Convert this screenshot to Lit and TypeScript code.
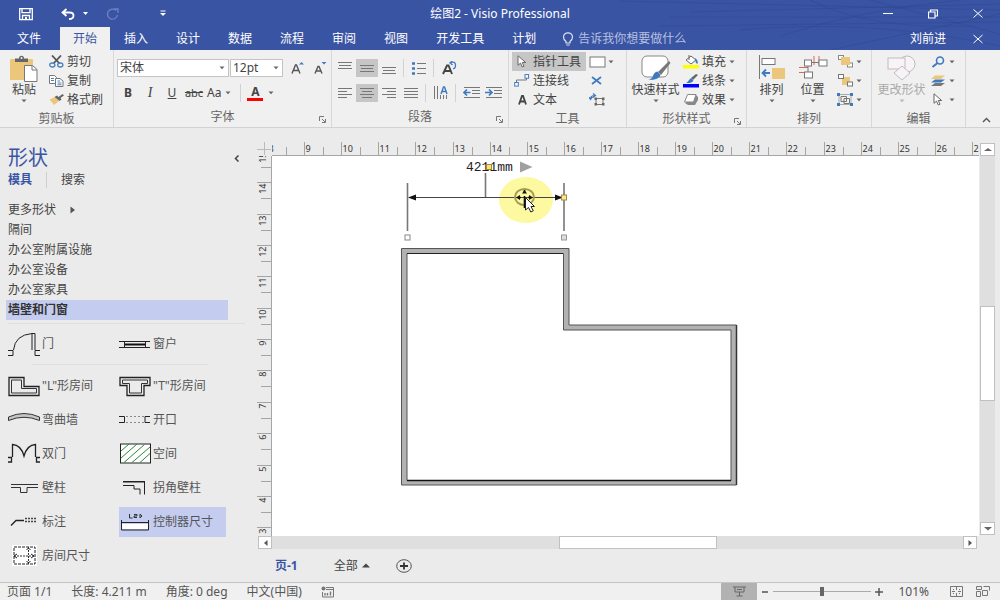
import { LitElement, html, svg, css, TemplateResult, SVGTemplateResult } from "lit";
import { customElement, state } from "lit/decorators.js";
import { classMap } from "lit/directives/class-map.js";

type Art = SVGTemplateResult;

const picture = (width: number, height: number, art: Art) => html`<svg
  class="pic"
  width=${width}
  height=${height}
  viewBox="0 0 ${width} ${height}"
  aria-hidden="true"
>${art}</svg>`;

const bars = (rows: number[][], width = 14) =>
  svg`${rows.map(([x, y, w]) => svg`<path d="M${x} ${y + 0.5}h${Math.min(w, width)}" stroke="#777" fill="none"/>`)}`;

const caret = html`<svg class="pic caret" width="6" height="4" viewBox="0 0 6 4" aria-hidden="true"><path d="M.5 .5h5L3 3.3z" fill="#666"/></svg>`;

const launcher = html`<button class="launcher" aria-label="更多选项">${picture(7, 7, svg`<path d="M.5 5V.5H5M3 3l3 3M6.500 3v3.500H3" fill="none" stroke="#777"/>`)}</button>`;

/* ---- ribbon icons ---- */
const icons: Record<string, TemplateResult> = {
  save: picture(14, 14, svg`<path d="M.7 1.700h12.600v11H.7zM3 1.700v4h8v-4M3.500 12.700V8.500h7v4.200" fill="none" stroke="#fff" stroke-width="1.300"/><path d="M6 10h2v3H6z" fill="#fff"/>`),
  undo: picture(14, 12, svg`<path d="M5.500 1L1.500 4.500l4 3.500M2 4.500h6.500q4 0 4 3.200T8 11" fill="none" stroke="#fff" stroke-width="1.800"/>`),
  redo: picture(14, 12, svg`<path d="M10 2.500A5 5 0 1 0 11.500 7M7.500 1H12v4" fill="none" stroke="#6c80c0" stroke-width="1.400"/>`),
  bulb: picture(12, 14, svg`<path d="M4 9.500Q1.500 7.500 1.500 5a4.500 4.200 0 0 1 9 0Q10.500 7.500 8 9.500V11H4zM4.300 13h3.400" fill="none" stroke="#dfe4f4" stroke-width="1.200"/>`),
  paste: picture(30, 28, svg`<rect x="1" y="4" width="23" height="21" rx="1" fill="#ecc67a"/><path d="M6 7V3.500h4Q10 .8 12.500 .8T15 3.500h4V7z" fill="#666"/><circle cx="12.500" cy="3" r="1" fill="#f0f0f0"/><path d="M15.500 10.500h8l4.500 4v12H15.500z" fill="#fff" stroke="#777"/><path d="M23 10.500v4.500h5" fill="none" stroke="#777"/>`),
  cut: picture(15, 13, svg`<path d="M3 .5l7.500 8M12 .5L4.500 8.500" stroke="#555" stroke-width="1.800"/><ellipse cx="3.300" cy="10" rx="2.600" ry="2" fill="none" stroke="#4a82bd" stroke-width="1.300"/><ellipse cx="11.300" cy="10" rx="2.600" ry="2" fill="none" stroke="#4a82bd" stroke-width="1.300"/>`),
  copy: picture(15, 12, svg`<path d="M.5 .5h5l2 2v6h-7z" fill="#fff" stroke="#777"/><path d="M6.500 3.500H11l3 2.500v5.500H6.500z" fill="#fff" stroke="#777"/><path d="M2 3.500h3M2 5.500h3M8.500 6h2.500M8.500 8h4M8.500 9.800h4" stroke="#4a82bd"/>`),
  brush: picture(15, 11, svg`<path d="M.5 5.500L6 3l4 4-5 4z" fill="#ecc67a"/><path d="M5.500 3L8 1.500l1.500 1.500L13.500 0 15 1.500 11.500 4l1 1.500-2 1.500z" fill="#666"/>`),
  grow: picture(14, 14, svg`<path d="M1 12.500L4.500 4h1L9 12.500M2.500 9.500h5" fill="none" stroke="#555" stroke-width="1.400"/><path d="M8 3.500h5L10.500 1z" fill="#3d7abf"/>`),
  shrink: picture(13, 14, svg`<path d="M1 12.500L4 5.500h1L8 12.500M2.300 10h4.400" fill="none" stroke="#555" stroke-width="1.400"/><path d="M7.500 1h5L10 3.500z" fill="#3d7abf"/>`),
  top: picture(14, 12, bars([[0, 0, 14], [1, 3, 12], [0, 6, 14]])),
  middle: picture(14, 12, bars([[0, 3, 14], [1, 6, 12], [0, 9, 14]])),
  bottom: picture(14, 12, bars([[0, 5, 14], [1, 8, 12], [0, 11, 14]])),
  left: picture(14, 11, bars([[0, 0, 14], [0, 3, 9], [0, 6, 14], [0, 9, 9]])),
  center: picture(14, 11, bars([[0, 0, 14], [2, 3, 10], [0, 6, 14], [2, 9, 10]])),
  right: picture(14, 11, bars([[0, 0, 14], [5, 3, 9], [0, 6, 14], [5, 9, 9]])),
  justify: picture(14, 11, bars([[0, 0, 14], [0, 3, 14], [0, 6, 14], [0, 9, 14]])),
  bullets: picture(14, 13, svg`<path d="M0 1.500h3M0 6.500h3M0 11.500h3" stroke="#3d7abf" stroke-width="2.600"/><path d="M5 1.500h9M5 6.500h9M5 11.500h9" stroke="#777"/>`),
  rotateText: picture(15, 14, svg`<path d="M1 13L5 4.500h1.500L10 13M3 10h5.500" fill="none" stroke="#444" stroke-width="1.900"/><path d="M8.500 1.500q5-1.500 5 2.500T11 7.500M10.500 0L8 1.800l2.500 2.200" fill="none" stroke="#3d7abf" stroke-width="1.300"/>`),
  textDir: picture(16, 14, svg`<path d="M1.500 0v13M4.500 0v13M7.500 9v4M10.500 9v4M13.500 9v4" stroke="#777"/><path d="M8 8l2.500-7h1L14 8M9 5.500h4" fill="none" stroke="#3d7abf" stroke-width="1.400"/>`),
  outdent: picture(17, 12, svg`<path d="M1 .5h16M9 3.500h8M9 6.500h8M1 10.500h16" stroke="#777"/><path d="M7.500 5.500H1M4 2.500l-3 3 3 3" fill="none" stroke="#3d7abf" stroke-width="1.700"/>`),
  indent: picture(17, 12, svg`<path d="M1 .5h16M9 3.500h8M9 6.500h8M1 10.500h16" stroke="#777"/><path d="M0 5.500h6.500M4 2.500l3 3-3 3" fill="none" stroke="#3d7abf" stroke-width="1.700"/>`),
  pointer: picture(10, 13, svg`<path d="M1 .8v9.500l2.500-2.200L5.300 12l1.700-.8-1.700-3.700h3.400z" fill="#fff" stroke="#666"/>`),
  connector: picture(16, 13, svg`<path d="M2.500 8V6H10M12.500 4v2H10" fill="none" stroke="#777"/><rect x=".7" y="8.500" width="3.600" height="3.600" fill="#fff" stroke="#3d7abf"/><rect x="11" y=".6" width="3.600" height="3.600" fill="#fff" stroke="#3d7abf"/>`),
  letter: picture(9, 10, svg`<path d="M1 9.500L4 .8h1L8 9.500M2.300 6.500h4.500" fill="none" stroke="#444" stroke-width="1.800"/>`),
  rect: picture(17, 12, svg`<rect x="1" y="1" width="15" height="10" fill="#fff" stroke="#777"/>`),
  cross: picture(12, 9, svg`<path d="M1 1l9 7M10 1L1 8" stroke="#3d7abf" stroke-width="1.700"/>`),
  freeTransform: picture(16, 13, svg`<path d="M7 5.500h7v6H7z" fill="none" stroke="#777"/><path d="M5.500 4.500h2.500v2.500H5.500zM13 4.500h2.500v2.500H13zM5.500 10h2.500v2.500H5.500zM13 10h2.500v2.500H13z" fill="#666"/><path d="M1.500 6Q1.500 2.500 6 2.500M4 .5l2.500 2L4 4.500M0 4l1.500 2.500L3.500 4" fill="none" stroke="#3d7abf" stroke-width="1.200"/>`),
  quick: picture(30, 27, svg`<rect x="1" y="1" width="26" height="21" rx="5" fill="#fff" stroke="#888"/><path d="M28 6L17 17l3 3L29.500 8z" fill="#777"/><path d="M7 25q4-1 5-4 1-4 4.500-4.500l3 3.500q-1 5-12.500 5z" fill="#3d7abf"/>`),
  fill: picture(16, 15, svg`<path d="M3 6l5-4 5 4-5 4z" fill="#fff" stroke="#666"/><path d="M6 1v5" stroke="#666"/><path d="M12 4q3.500 2 2.500 6-2-1-2.500-4z" fill="#3d7abf"/><path d="M0 11h16v3.500H0z" fill="#ff0"/>`),
  line: picture(16, 15, svg`<path d="M13 1L8 5l2 2L15 2z" fill="#666"/><path d="M3 10q2-1 3-3l2-2 2.500 2.500Q9 10.500 3 10z" fill="#3d7abf"/><path d="M0 11h16v3.500H0z" fill="#00f"/>`),
  effect: picture(16, 13, svg`<path d="M2 10l3 2h7l3-5V4l-2-2z" fill="#888"/><path d="M4.500 1.500H13L10.500 9H1.500z" fill="#fff" stroke="#888" stroke-linejoin="round"/>`),
  align: picture(26, 26, svg`<path d="M.5 0v24" stroke="#777"/><rect x="3" y="3.500" width="13" height="6" fill="#fff" stroke="#777"/><rect x="13" y="13" width="13" height="11" fill="#ecc67a"/><path d="M11 18H4M7 14.500L3.500 18 7 21.500" fill="none" stroke="#3d7abf" stroke-width="1.800"/>`),
  place: picture(30, 26, svg`<path d="M16 1v9M21 1v9M1 12.500h9M1 17.500h5" stroke="#d66a55"/><path d="M13 7.500h8M10 11v10" stroke="#777" fill="none"/><g fill="#fff" stroke="#777"><rect x="6.500" y="5" width="7" height="6"/><rect x="21" y="5" width="8" height="6"/><rect x="6.500" y="17" width="8" height="6"/></g>`),
  front: picture(15, 13, svg`<rect x=".5" y=".5" width="5" height="4" fill="#fff" stroke="#888"/><rect x="9.500" y="8" width="5" height="4" fill="#fff" stroke="#888"/><rect x="3" y="2" width="9" height="8" fill="#ecc67a"/>`),
  back: picture(15, 13, svg`<rect x="4" y="3" width="8" height="8" fill="#ecc67a"/><rect x=".5" y=".5" width="5" height="4" fill="#fff" stroke="#777"/><rect x="9.500" y="8" width="5" height="4" fill="#fff" stroke="#777"/>`),
  group: picture(16, 13, svg`<path d="M2 1.500h12v10H2z" fill="none" stroke="#aaa"/><path d="M4 3.500h5.500v5H4zM7 5.500h5.500v5H7z" fill="none" stroke="#777"/><path d="M0 0h3v3H0zM13 0h3v3h-3zM0 10h3v3H0zM13 10h3v3h-3z" fill="#3d7abf"/>`),
  change: picture(30, 27, svg`<g fill="#f7f3f7" stroke="#c0bcc0"><circle cx="20" cy="9" r="8"/><rect x="1" y="3" width="17" height="11"/><path d="M15 11l8 7-8 7-8-7z"/></g>`),
  find: picture(14, 12, svg`<circle cx="9" cy="4.500" r="3.500" fill="none" stroke="#3d7abf" stroke-width="1.600"/><path d="M6.500 7L1.500 11" stroke="#3d7abf" stroke-width="2"/>`),
  layers: picture(16, 13, svg`<path d="M1 12l4-3h10l-4 3z" fill="#777"/><path d="M1 8.500l4-3h10l-4 3z" fill="#3d7abf"/><path d="M1 5l4-3.500h10L11 5z" fill="#ecc67a"/>`),
};

/* ---- stencil masters, each on a 32 x 24 tile ---- */
const masters: Record<string, Art> = {
  door: svg`<path d="M0 18.500h5v5H0M32 18.500h-5v5h5M5.500 18Q7 3 24 1.500V18M24 1.500h3V18" fill="none" stroke="#222"/>`,
  window: svg`<path d="M0 9.500h31M0 15.500h31M5.500 9v7M26.500 9v7" stroke="#222"/><path d="M6 12.500h20" stroke="#111" stroke-width="2"/>`,
  lRoom: svg`<path d="M1 3.500h15v9h15v9H1z" fill="none" stroke="#222" stroke-width="1.300"/><path d="M3.500 6h10v8.500H28.500V19H3.500z" fill="none" stroke="#333"/>`,
  tRoom: svg`<path d="M1 3.500h30v8h-6v10H8v-10H1z" fill="none" stroke="#222" stroke-width="1.300"/><path d="M3.500 6h25v3.500h-6V19H10.500V9.500h-7z" fill="none" stroke="#333"/>`,
  curved: svg`<path d="M.5 9Q16 2 31.500 9v3.500Q16 6 .5 12.500z" fill="#c4c4c4" stroke="#333"/>`,
  opening: svg`<path d="M0 8.500h5.500v6H0M31 8.500h-5v6h5" fill="none" stroke="#222"/><path d="M7 8.500h18M7 14.500h18" stroke="#888" stroke-dasharray="2 2"/>`,
  doubleDoor: svg`<path d="M0 15.500h3.500v4.500H0M32 15.500h-3.500v4.500H32M4.500 15V2.500Q13 3 16 14 19 3 27.500 2.500V15" fill="none" stroke="#222" stroke-width="1.300"/>`,
  space: svg`<rect x="1.500" y="2" width="30" height="19" fill="#fff" stroke="#222"/><path d="M2 9l8-7M2 16L18 2M5 20.500L25.500 2.500M13 20.500L31 5M21 20.500l10-9" stroke="#2c8a3c"/>`,
  pilaster: svg`<path d="M3 8.500h27M3 11.500h9.500v5h6.500v-5h11" fill="none" stroke="#333"/>`,
  cornerPilaster: svg`<path d="M4 6h21.500v12.500M4 9.500h11v3.500h6v5.500" fill="none" stroke="#222"/><path d="M4 5.500h22" stroke="#222"/>`,
  callout: svg`<path d="M3 15.500l5-5h8" fill="none" stroke="#222" stroke-width="1.300"/><path d="M17 8.500h11M17 11.500h11" stroke="#444" stroke-width="1.500" stroke-dasharray="2 1"/>`,
  dimension: svg`<path d="M2.500 10v10h27V10M2.500 12.500h27" fill="none" stroke="#222"/><path d="M3 14h26v5H3z" fill="#fff"/><path d="M10.500 4v4h3M15 4.500h3v1.500h-3v1.500h3M21 4v4l2-2z" fill="none" stroke="#333"/>`,
  roomSize: svg`<path d="M4 1h25v21H4z" fill="#fff"/><path d="M6 3h21v17H6z" fill="none" stroke="#222" stroke-dasharray="3 1"/><path d="M6 12h21M20.500 3v17" stroke="#333" stroke-dasharray="2 1"/><path d="M9 10l-3 2 3 2M23 10l3 2-3 2M18.500 6l2-2 2 2M18.500 17l2 2 2-2" fill="none" stroke="#222"/>`,
};

/* ---- rulers ---- */
@customElement("sheet-ruler")
class SheetRuler extends LitElement {
  static properties = {
    vertical: { type: Boolean, reflect: true },
    origin: { type: Number },
    step: { type: Number },
    first: { type: Number },
    count: { type: Number },
  };
  declare vertical: boolean;
  declare origin: number;
  declare step: number;
  declare first: number;
  declare count: number;

  static styles = css`
    :host { display: block; overflow: hidden; min-width: 0; min-height: 0; }
    svg { display: block; width: 100%; height: 100%; }
    path { stroke: #a4a4a4; fill: none; }
    text { font: 9px/1 "Noto Sans", sans-serif; fill: #333; }
    :host(:not([vertical])) { border-bottom: 1px solid #a6a6a6; }
    :host([vertical]) { border-right: 1px solid #a6a6a6; }
  `;

  render() {
    const marks = Array.from({ length: this.count }, (_, i) => i);
    return html`<svg aria-hidden="true">${marks.map((i) => {
      const at = Math.round(this.origin + i * this.step) + 0.5;
      const half = Math.floor(at + this.step / 2) + 0.5;
      return this.vertical
        ? svg`<path d="M0 ${at}h14M4 ${half}h10"/><text text-anchor="end" transform="translate(9 ${at + 1}) rotate(-90)">${this.first - i}</text>`
        : svg`<path d="M${at} 0v14M${half} 5v9"/><text x=${at + 1} y="10">${this.first + i}</text>`;
    })}</svg>`;
  }
}

@customElement("app-root")
class AppRoot extends LitElement {
  @state() private tab = "开始";
  @state() private stencil = "墙壁和门窗";

  static styles = css`
    :host {
      display: flex; flex-direction: column; height: 100vh; overflow: hidden;
      font: 12px/16px "Noto Sans", "Noto Sans CJK SC", sans-serif;
      color: #444; background: #ebebeb;
    }
    * { box-sizing: border-box; }
    button, select, input { font: inherit; color: inherit; margin: 0; }
    button { padding: 0; border: 0; background: none; display: flex; align-items: center; justify-content: center; white-space: nowrap; }
    h1, h2, ul { margin: 0; padding: 0; font: inherit; list-style: none; }
    .pic { display: block; flex: none; }

    /* title and tabs */
    header { position: relative; background: #3a54a4; color: #fff; flex: none; }
    .grain { position: absolute; right: 0; top: 0; width: 460px; height: 50px; }
    .titlebar { position: relative; display: grid; grid-template-columns: 1fr auto 1fr; height: 27px; align-items: center; }
    .quick { display: flex; align-items: center; padding-left: 19px; }
    .quick .undo { margin-left: 28px; gap: 8px; }
    .quick .redo { margin-left: 18px; }
    .quick .custom { margin-left: 40px; }
    .windowing { display: flex; justify-content: flex-end; gap: 35px; padding-right: 17px; }
    .tabs { position: relative; display: flex; height: 23px; align-items: stretch; padding-right: 17px; }
    .tab { padding: 0 14px; color: #fff; }
    .tab.file { padding: 0 19px 0 17px; }
    .tab.on { background: #f0f0f0; color: #3a54a4; padding: 0 13px; }
    .tell { display: flex; align-items: center; gap: 4px; margin-left: 12px; flex: 1; min-width: 0; }
    .tell input { background: none; border: 0; padding: 0; width: 100%; outline: 0; }
    .tell input::placeholder { color: #b6c0e0; opacity: 1; }
    .account { margin-right: 27px; color: #fff; }

    /* ribbon */
    .ribbon { display: flex; flex: none; height: 78px; background: #f0f0f0; border-bottom: 1px solid #d2d2d2; }
    .group { display: flex; flex-direction: column; flex: none; border-right: 1px solid #d8d8d8; }
    .body { height: 59px; padding-top: 2px; display: flex; }
    .caption { position: relative; height: 20px; line-height: 20px; text-align: center; color: #666; }
    .launcher { position: absolute; right: 5px; top: 9px; }
    .clip { width: 114px; } .font { width: 218px; } .para { width: 177px; }
    .tools { width: 118px; } .style { width: 120px; } .arrange { width: 125px; } .edit { width: 94px; }
    .big { flex-direction: column; justify-content: flex-start; padding-top: 3px; }
    .big .art { height: 27px; display: flex; align-items: flex-start; }
    .big .caret { margin-top: 1px; }
    .big:disabled { color: #aaa; }
    .big:disabled .caret { opacity: .4; }
    .stack { display: flex; flex-direction: column; }
    .stack button { height: 19px; justify-content: flex-start; gap: 3px; }
    .stack .slot { width: 16px; display: flex; justify-content: center; }
    .clip .big { width: 48px; }
    .tools .body { padding-left: 3px; gap: 3px; }
    .tools .stack.names button { padding: 0 5px 0 2px; }
    .on-gray { background: #c6c6c6; }
    .lines { flex-direction: column; gap: 7px; padding-top: 9px; }
    .line { display: flex; height: 18px; align-items: center; }
    .font .body { padding-left: 3px; }
    .picker { appearance: none; height: 18px; line-height: 14px; border: 1px solid #c4c4c4; border-radius: 0; padding: 0 2px;
      background: #fff url('data:image/svg+xml,<svg xmlns="http://www.w3.org/2000/svg" width="6" height="4"><path d="M.5 .5h5L3 3.300z" fill="%23666"/></svg>') no-repeat right 3px center; }
    .face { width: 112px; } .size { width: 53px; margin: 0 4px 0 1px; }
    .letter { width: 22px; height: 18px; }
    .b { font-weight: 700; } .i { font-style: italic; font-family: "Liberation Serif", serif; font-size: 14px; } .u { text-decoration: underline; }
    .s { text-decoration: line-through; font-size: 11px; }
    .case { gap: 4px; padding-left: 2px; }
    .rule { width: 1px; height: 18px; background: #d2d2d2; flex: none; }
    .font .line + .line { padding-left: 0; }
    .font .rule { margin: 0 6px 0 9px; }
    .ink { flex-direction: column; font-weight: 700; line-height: 11px; width: 16px; border-bottom: 3px solid #f00; height: 15px; }
    .after { margin-left: 5px; }
    .para .body { padding-left: 2px; }
    .sq { width: 22px; height: 18px; }
    .para .rule { margin: 0 4px 0 3px; }
    .style .body { padding-left: 4px; gap: 3px; }
    .big.wide { width: 49px; }
    .arrange .body { padding-left: 4px; }
    .arrange .big { width: 41px; }
    .arrange .stack { padding-left: 4px; }
    .edit .body { padding-left: 3px; gap: 2px; }
    .edit .big { width: 53px; }
    .collapse { margin: auto 9px 4px auto; }

    /* workspace */
    .work { display: flex; flex: 1; min-height: 0; }
    .side { width: 257px; flex: none; overflow: hidden; }
    .side-head { display: flex; justify-content: space-between; padding: 20px 18px 0 8px; }
    .side h1 { font-size: 20px; line-height: 20px; color: #3a54a4; }
    .modes { display: flex; gap: 14px; padding: 4px 0 0 8px; }
    .modes button + button { padding-left: 14px; border-left: 1px solid #cfcfcf; }
    .modes .on { color: #3a54a4; font-weight: 700; }
    .stencils { padding: 12px 16px 0 6px; }
    .stencils button { width: 222px; height: 20px; padding-left: 2px; justify-content: flex-start; gap: 14px; }
    .stencils button.on { background: #c4cdf0; font-weight: 700; color: #333; }
    .masters { display: grid; grid-template-columns: 107px 107px; column-gap: 4px; margin: 3px 12px 0 8px; padding-top: 3px; border-top: 1px solid #dedede; }
    .masters button { height: 30px; margin: 2px 0; justify-content: flex-start; gap: 2px; color: #555; }
    .masters .on { background: #c4cdf0; }
    .masters hr { grid-column: 1 / -1; width: 176px; margin: 3px 0 4px 24px; border: 0; border-top: 1px solid #dedede; }

    .editor { flex: 1; min-width: 0; display: grid; grid-template: 14px 14px minmax(0, 1fr) 13px 33px / 15px minmax(0, 1fr) 21px; }
    .corner { grid-area: 2 / 1; }
    .hr { grid-area: 2 / 2; } .vr { grid-area: 3 / 1; }
    .sheet { grid-area: 3 / 2; background: #fff; width: 100%; height: 100%; }
    .sheet text { font: 13px "Liberation Mono", monospace; fill: #222; }
    .vbar { grid-area: 2 / 3 / 4 / 4; margin: 1px 5px 1px 1px; display: flex; flex-direction: column; background: #dfdfdf; }
    .hbar { grid-area: 4 / 1 / 5 / 3; display: flex; background: #dfdfdf; margin: 0 2px 0 1px; }
    .step { flex: none; background: #fff; border: 1px solid #c0c0c0; }
    .vbar .step { height: 13px; } .hbar .step { width: 14px; }
    .trough { flex: 1; display: flex; }
    .vbar .trough { flex-direction: column; }
    .thumb { background: #fff; border: 1px solid #c0c0c0; }
    .pages { grid-area: 5 / 1 / 6 / 4; display: flex; align-items: center; padding-left: 18px; }
    .pages .now { color: #3a54a4; font-weight: 700; }
    .pages .all { gap: 4px; margin: 0 26px 0 36px; }

    footer { display: flex; flex: none; height: 18px; align-items: center; border-top: 1px solid #c4c4c4; background: #f0f0f0; padding: 0 9px 0 7px; color: #555; }
    .facts { display: flex; flex: 1; gap: 19px; align-items: center; height: 15px; }
    .present { width: 36px; align-self: stretch; background: #b2b2b2; }
    .zoom { display: flex; align-items: center; gap: 4px; margin: 0 15px 0 4px; }
    .zoom input { appearance: none; width: 98px; height: 11px; background: linear-gradient(#aaa, #aaa) center / 100% 1px no-repeat; }
    .zoom input::-webkit-slider-thumb { appearance: none; width: 4px; height: 9px; background: #666; }
    .fit { margin: 0 13px 0 21px; }
  `;

  private big(cls: string, icon: string, label: string, disabled = false) {
    return html`<button class="big ${cls}" ?disabled=${disabled}><span class="art">${icons[icon]}</span>${label}${caret}</button>`;
  }

  private small(icon: string, label: string, menu = false, on = false) {
    return html`<button class=${classMap({ "on-gray": on })}><span class="slot">${icons[icon]}</span>${label}${menu ? caret : ""}</button>`;
  }

  private square(icon: string, label: string, on = false) {
    return html`<button class=${classMap({ sq: true, "on-gray": on })} aria-label=${label}>${icons[icon]}</button>`;
  }

  private header() {
    const tabs = ["文件", "开始", "插入", "设计", "数据", "流程", "审阅", "视图", "开发工具", "计划"];
    return html`<header>
      <svg class="grain" aria-hidden="true"><path d="M80 1L460 10M150 12L460 4M130 17H460M120 26L460 22M270 0Q330 30 430 26M240 36Q320 10 420 0M290 50L460 14M200 30Q330 18 460 46M330 0L460 34" fill="none" stroke="#314a94" opacity=".6"/></svg>
      <div class="titlebar">
        <div class="quick">
          <button aria-label="保存">${icons.save}</button>
          <button class="undo" aria-label="撤消">${icons.undo}${picture(5, 3, svg`<path d="M0 0h5L2.500 3z" fill="#fff"/>`)}</button>
          <button class="redo" aria-label="恢复">${icons.redo}</button>
          <button class="custom" aria-label="自定义快速访问工具栏">${picture(6, 7, svg`<path d="M.5 1h5" stroke="#fff"/><path d="M0 3h6L3 6z" fill="#fff"/>`)}</button>
        </div>
        <h1>绘图2 - Visio Professional</h1>
        <div class="windowing">
          <button aria-label="最小化">${picture(10, 10, svg`<path d="M0 4.500h10" stroke="#fff"/>`)}</button>
          <button aria-label="还原">${picture(10, 10, svg`<path d="M.5 3h6.500v6H.5zM2.500 3V1h7v6H7" fill="none" stroke="#fff" stroke-width="1.200"/>`)}</button>
          <button aria-label="关闭">${picture(10, 10, svg`<path d="M.5 .5l9 8M9.500 .5l-9 8" stroke="#fff"/>`)}</button>
        </div>
      </div>
      <nav class="tabs">
        ${tabs.map((t) => html`<button class=${classMap({ tab: true, file: t === "文件", on: t === this.tab })} @click=${() => (this.tab = t)}>${t}</button>`)}
        <label class="tell">${icons.bulb}<input aria-label="告诉我你想要做什么" placeholder="告诉我你想要做什么" /></label>
        <button class="account">刘前进</button>
        <button aria-label="关闭绘图">${picture(10, 10, svg`<path d="M.5 1l9 8M9.500 1l-9 8" stroke="#fff"/>`)}</button>
      </nav>
    </header>`;
  }

  private ribbon() {
    return html`<div class="ribbon">
      <section class="group clip">
        <div class="body">
          ${this.big("", "paste", "粘贴")}
          <div class="stack">${this.small("cut", "剪切")}${this.small("copy", "复制")}${this.small("brush", "格式刷")}</div>
        </div>
        <h2 class="caption">剪贴板</h2>
      </section>
      <section class="group font">
        <div class="body lines">
          <div class="line">
            <select class="picker face" aria-label="字体"><option>宋体</option></select>
            <select class="picker size" aria-label="字号"><option>12pt</option></select>
            <button class="sq" aria-label="增大字号">${icons.grow}</button>
            <button class="sq" aria-label="减小字号">${icons.shrink}</button>
          </div>
          <div class="line">
            <button class="letter b">B</button><button class="letter i">I</button><button class="letter u">U</button><button class="letter s">abc</button>
            <button class="case">Aa ${caret}</button>
            <span class="rule"></span>
            <button class="ink">A</button><button class="after" aria-label="字体颜色">${caret}</button>
          </div>
        </div>
        <h2 class="caption">字体${launcher}</h2>
      </section>
      <section class="group para">
        <div class="body lines">
          <div class="line">
            ${this.square("top", "顶端对齐")}${this.square("middle", "中部对齐", true)}${this.square("bottom", "底端对齐")}
            <span class="rule"></span>${this.square("bullets", "项目符号")}
            <span class="rule"></span>${this.square("rotateText", "旋转文本")}
          </div>
          <div class="line">
            ${this.square("left", "左对齐")}${this.square("center", "居中", true)}${this.square("right", "右对齐")}${this.square("justify", "两端对齐")}
            <span class="rule"></span>${this.square("textDir", "文字方向")}
            <span class="rule"></span>${this.square("outdent", "减少缩进量")}${this.square("indent", "增加缩进量")}
          </div>
        </div>
        <h2 class="caption">段落${launcher}</h2>
      </section>
      <section class="group tools">
        <div class="body">
          <div class="stack names">${this.small("pointer", "指针工具", false, true)}${this.small("connector", "连接线")}${this.small("letter", "文本")}</div>
          <div class="stack">${this.small("rect", "", true)}${this.small("cross", "")}${this.small("freeTransform", "")}</div>
        </div>
        <h2 class="caption">工具</h2>
      </section>
      <section class="group style">
        <div class="body">
          ${this.big("wide", "quick", "快速样式")}
          <div class="stack">${this.small("fill", "填充", true)}${this.small("line", "线条", true)}${this.small("effect", "效果", true)}</div>
        </div>
        <h2 class="caption">形状样式${launcher}</h2>
      </section>
      <section class="group arrange">
        <div class="body">
          ${this.big("", "align", "排列")}${this.big("", "place", "位置")}
          <div class="stack">${this.small("front", "", true)}${this.small("back", "", true)}${this.small("group", "", true)}</div>
        </div>
        <h2 class="caption">排列</h2>
      </section>
      <section class="group edit">
        <div class="body">
          ${this.big("", "change", "更改形状", true)}
          <div class="stack">${this.small("find", "", true)}${this.small("layers", "", true)}${this.small("pointer", "", true)}</div>
        </div>
        <h2 class="caption">编辑</h2>
      </section>
      <button class="collapse" aria-label="折叠功能区">${picture(9, 6, svg`<path d="M1 5l3.500-3.500L8 5" fill="none" stroke="#555" stroke-width="1.400"/>`)}</button>
    </div>`;
  }

  private master(art: string, label: string, on = false) {
    return html`<button class=${classMap({ on })}>${picture(32, 24, masters[art])}${label}</button>`;
  }

  private sidebar() {
    const list = ["隔间", "办公室附属设施", "办公室设备", "办公室家具", "墙壁和门窗"];
    return html`<aside class="side">
      <div class="side-head"><h1>形状</h1><button aria-label="折叠">${picture(5, 7, svg`<path d="M4.500 .5L1.500 3.500l3 3" fill="none" stroke="#444" stroke-width="1.500"/>`)}</button></div>
      <div class="modes"><button class="on">模具</button><button>搜索</button></div>
      <ul class="stencils">
        <li><button>更多形状 ${picture(6, 8, svg`<path d="M.5 .5v7L5 4z" fill="#555"/>`)}</button></li>
        ${list.map((s) => html`<li><button class=${classMap({ on: s === this.stencil })} @click=${() => (this.stencil = s)}>${s}</button></li>`)}
      </ul>
      <div class="masters">
        ${this.master("door", "门")}${this.master("window", "窗户")}
        <hr />
        ${this.master("lRoom", '"L"形房间')}${this.master("tRoom", '"T"形房间')}
        ${this.master("curved", "弯曲墙")}${this.master("opening", "开口")}
        ${this.master("doubleDoor", "双门")}${this.master("space", "空间")}
        ${this.master("pilaster", "壁柱")}${this.master("cornerPilaster", "拐角壁柱")}
        ${this.master("callout", "标注")}${this.master("dimension", "控制器尺寸", true)}
        ${this.master("roomSize", "房间尺寸")}
      </div>
    </aside>`;
  }

  private sheet() {
    return html`<svg class="sheet" role="img" aria-label="绘图页">
      <path d="M129.500 92.500H297V169H464.500V329H129.500zM135 97.500V324.500H459V174H291.500V97.500z" fill="#b2b2b2" stroke="#555" fill-rule="evenodd"/>
      <path d="M135 324.500H459" stroke="#111" stroke-width="1.400"/>
      <path d="M135 97.500H291" stroke="#222"/>
      <path d="M464.500 169V329" stroke="#333" stroke-width="1.500"/>
      <ellipse cx="254" cy="44" rx="27" ry="23" fill="#fdf9a0"/>
      <path d="M135.500 27v48M292 27v48M213.500 17v24.500" stroke="#777" stroke-width="1.600"/>
      <path d="M138 41.500H289" stroke="#444"/>
      <path d="M136 41.500l8-3v6zM291 41.500l-8-3v6z" fill="#111"/>
      <text x="194" y="15">4211mm</text>
      <rect x="214.500" y="8.500" width="5" height="5" fill="#f4e27a" stroke="#a08a40"/>
      <path d="M248 5.500v11l12.500-5.500z" fill="#a0a0a0"/>
      <ellipse cx="252.500" cy="41" rx="9.500" ry="8" fill="none" stroke="#a39b52" stroke-width="2"/>
      <path d="M252.500 34v3M252.500 40v12M246 41.500h3M256 41.500h3" stroke="#111" stroke-width="1.600"/>
      <path d="M250 37.500l2.500-3.500 2.500 3.500zM248 39l-4 2.500 4 2.500zM257 39l4 2.500-4 2.500z" fill="#111"/>
      <path d="M253.500 41.500v12.500l3-2.500 2.300 4.500 2.500-1.200-2.300-4.300h3.500z" fill="#fff" stroke="#222"/>
      <rect x="289.500" y="39" width="5" height="5" fill="#f9e98a" stroke="#a08a40"/>
      <rect x="133" y="79" width="5" height="5" fill="#fff" stroke="#888"/>
      <rect x="289.500" y="79" width="5" height="5" fill="#ddd" stroke="#999"/>
    </svg>`;
  }

  private editor() {
    return html`<main class="editor">
      <div class="corner">${picture(15, 14, svg`<path d="M0 7.500h14M7.500 0v13" stroke="#bbb"/>`)}</div>
      <sheet-ruler class="hr" .origin=${-5} .step=${37.1} .first=${8} .count=${20}></sheet-ruler>
      <sheet-ruler class="vr" vertical .origin=${-5} .step=${31.35} .first=${15} .count=${13}></sheet-ruler>
      ${this.sheet()}
      <div class="vbar">
        <button class="step" aria-label="向上">${picture(8, 5, svg`<path d="M0 4h8L4 1z" fill="#666"/>`)}</button>
        <div class="trough"><div style="height:41%"></div><div class="thumb" style="height:26%"></div></div>
        <button class="step" aria-label="向下">${picture(8, 5, svg`<path d="M0 1h8L4 4.500z" fill="#666"/>`)}</button>
      </div>
      <div class="hbar">
        <button class="step" aria-label="向左">${picture(5, 6, svg`<path d="M4.500 0v6L1 3z" fill="#555"/>`)}</button>
        <div class="trough"><div style="width:41.6%"></div><div class="thumb" style="width:22.8%"></div></div>
        <button class="step" aria-label="向右">${picture(5, 6, svg`<path d="M.5 0v6L4 3z" fill="#555"/>`)}</button>
      </div>
      <nav class="pages">
        <button class="now">页-1</button>
        <button class="all">全部 ${picture(8, 5, svg`<path d="M0 4.500h8L4 .5z" fill="#444"/>`)}</button>
        <button aria-label="插入页">${picture(16, 14, svg`<ellipse cx="8" cy="7" rx="7.300" ry="6.300" fill="none" stroke="#555"/><path d="M4 7h8M8 3.500v7" stroke="#333" stroke-width="1.800"/>`)}</button>
      </nav>
    </main>`;
  }

  private status() {
    return html`<footer>
      <div class="facts">
        <span>页面 1/1</span><span>长度: 4.211 m</span><span>角度: 0 deg</span><span>中文(中国)</span>
        ${picture(13, 12, svg`<path d="M5 1.500h7.500v9.500H1.500V6M5 3.500h7" fill="none" stroke="#777"/><circle cx="2.500" cy="2.500" r="2" fill="#777"/><path d="M4 9.500V7M6.500 9.500V7M9.500 9.500V5.500" stroke="#777" stroke-width="1.400"/>`)}
      </div>
      <button class="present" aria-label="演示模式">${picture(13, 11, svg`<path d="M0 1h13M2 1v5h9V1M6.500 6v4M3.500 10h6M4 3.500h5" fill="none" stroke="#666"/>`)}</button>
      <div class="zoom">
        <button aria-label="缩小">${picture(8, 8, svg`<path d="M1 4h6" stroke="#555" stroke-width="1.500"/>`)}</button>
        <input type="range" aria-label="缩放" min="0" max="100" value="50" />
        <button aria-label="放大">${picture(8, 8, svg`<path d="M0 4h8M4 0v8" stroke="#555" stroke-width="1.500"/>`)}</button>
      </div>
      <span>101%</span>
      <button class="fit" aria-label="适应窗口">${picture(13, 11, svg`<path d="M.5 .5h12v10H.5z" fill="none" stroke="#777"/><path d="M6.500 1v3M6.500 7v3M2 5.500h3M8 5.500h3M3 3l1 1M10 3L9 4M3 8l1-1M10 8L9 7" stroke="#777"/>`)}</button>
      <button aria-label="切换窗口">${picture(15, 11, svg`<path d="M.5 .5h5v3h-5zM7.500 .5h6v4M.5 5.500h4v5h-4zM6.500 4.500h5v5h-5z" fill="none" stroke="#777"/>`)}</button>
    </footer>`;
  }

  render() {
    return html`${this.header()}${this.ribbon()}
      <div class="work">${this.sidebar()}${this.editor()}</div>
      ${this.status()}`;
  }
}
